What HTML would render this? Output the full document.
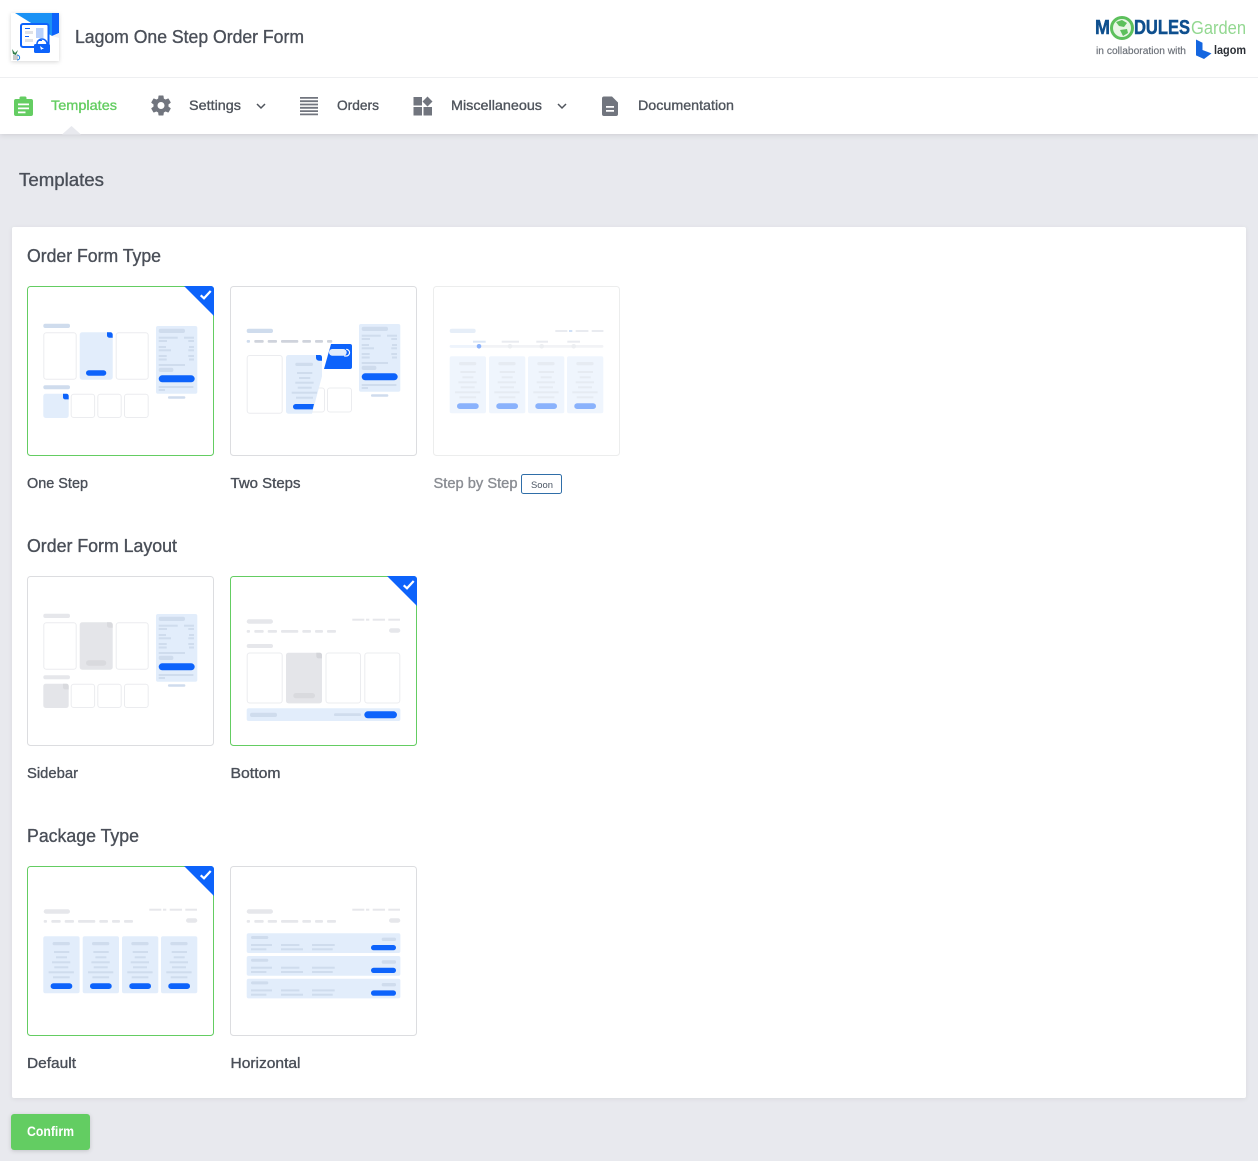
<!DOCTYPE html>
<html lang="en"><head><meta charset="utf-8"><title>Lagom One Step Order Form</title>
<style>
html,body{margin:0;padding:0;background:#e8e9ee;width:1258px;height:1161px;overflow:hidden}
svg{display:block;position:absolute;left:0;top:0}
text{font-family:"Liberation Sans",Arial,sans-serif}
.m{stroke:currentColor;stroke-width:.35px}
.c{fill:var(--bg)}.l{fill:var(--ln)}.b{fill:var(--bt)}.w{fill:#fff;stroke:var(--wb,#ebecef);stroke-width:1}
.g{fill:var(--gr,#e6e7eb)}
</style></head><body>
<svg width="1258" height="1161" viewBox="0 0 1258 1161" xmlns="http://www.w3.org/2000/svg">
<defs>
<filter id="sh" x="-5%" y="-5%" width="110%" height="110%"><feDropShadow dx="0" dy="1" stdDeviation="2" flood-color="#000" flood-opacity=".07"/></filter>
<filter id="sh2" x="-30%" y="-30%" width="160%" height="160%"><feDropShadow dx="0" dy="1" stdDeviation="2" flood-color="#000" flood-opacity=".16"/></filter>
<filter id="sh3" x="-30%" y="-30%" width="160%" height="160%"><feDropShadow dx="0" dy="1" stdDeviation="3" flood-color="#000" flood-opacity=".12"/></filter>

<g id="sb">
<rect width="41.3" height="67.7" rx="2" fill="#e2edfb"/>
<g fill="#cfdced">
<rect x="2.7" y="2.7" width="26.3" height="4.3" rx="2"/>
<rect x="2.7" y="10.7" width="19" height="2"/><rect x="28" y="10.7" width="10" height="2"/>
<rect x="2.7" y="14" width="8.3" height="2"/><rect x="32.3" y="14" width="5.7" height="2"/>
<rect x="2.7" y="20" width="7.3" height="2"/><rect x="33" y="20" width="5" height="2"/>
<rect x="2.7" y="23.3" width="12.3" height="2"/><rect x="32.3" y="23.3" width="5.7" height="2"/>
<rect x="2.7" y="29" width="8" height="2"/><rect x="32.3" y="29" width="5.7" height="2"/>
<rect x="2.7" y="32.5" width="8" height="2"/><rect x="33" y="32.5" width="5" height="2"/>
<rect x="2.7" y="38" width="26.3" height="2"/>
<rect x="2.7" y="41.7" width="14.7" height="4.3" rx="2"/>
<rect x="2.7" y="60" width="34.7" height="2"/>
<rect x="2.7" y="63" width="6.3" height="2"/>
<rect x="12" y="70.3" width="17.3" height="2.4" rx="1"/>
</g>
<rect x="2.7" y="49.3" width="36" height="7" rx="3.5" fill="#0d63fb"/>
</g>

<g id="ol">
<rect class="l" x="16.3" y="37.7" width="26.7" height="4.3" rx="2"/>
<rect class="w" x="16.8" y="46.8" width="32.4" height="46.4" rx="2.5"/>
<rect class="c" x="52.7" y="46.3" width="33" height="47.4" rx="2.5"/>
<path class="b" d="M80 46.3h3.5a2.2 2.2 0 0 1 2.2 2.2v3.2h-3.5a2.2 2.2 0 0 1-2.2-2.2z"/>
<rect class="b" x="59" y="84.3" width="20.3" height="5.4" rx="2.7"/>
<rect class="w" x="89.2" y="46.8" width="32" height="46.4" rx="2.5"/>
<rect class="l" x="16.3" y="99.3" width="26.7" height="4" rx="2"/>
<rect class="c" x="16.3" y="107.7" width="25.4" height="24.3" rx="2.5"/>
<path class="b" d="M36 107.7h3.5a2.2 2.2 0 0 1 2.2 2.2v3.5h-3.5a2.2 2.2 0 0 1-2.2-2.2z"/>
<rect class="w" x="44.2" y="108.2" width="23.4" height="23.3" rx="2.5"/>
<rect class="w" x="70.8" y="108.2" width="23.4" height="23.3" rx="2.5"/>
<rect class="w" x="97.5" y="108.2" width="23.7" height="23.3" rx="2.5"/>
</g>

<g id="hd" class="g">
<rect x="16.7" y="43.3" width="26.3" height="4.4" rx="2.2"/>
<rect x="122.3" y="42.7" width="12" height="2"/><rect x="136" y="42.7" width="3.3" height="2"/><rect x="142.7" y="42.7" width="12.3" height="2"/><rect x="158.3" y="42.7" width="11.7" height="2"/>
</g>
<g id="ds" class="g">
<rect x="16.7" y="54" width="3.3" height="2.7" rx="1"/><rect x="24.3" y="54" width="9.4" height="2.7" rx="1"/><rect x="37.7" y="54" width="9.3" height="2.7" rx="1"/><rect x="51" y="54" width="17.3" height="2.7" rx="1"/><rect x="72.3" y="54" width="8.7" height="2.7" rx="1"/><rect x="85" y="54" width="8" height="2.7" rx="1"/>
</g>
<g id="col">
<rect class="c" width="36.3" height="57" rx="2"/>
<g class="l">
<rect x="9.3" y="5.7" width="17.3" height="3.3" rx="1.5"/>
<rect x="10.7" y="14.7" width="15.3" height="2"/><rect x="12.7" y="20" width="11" height="2"/><rect x="8.7" y="25" width="18.3" height="2"/><rect x="11" y="30" width="14" height="2"/><rect x="5.3" y="35" width="25.3" height="2"/><rect x="9.7" y="40" width="16.7" height="2"/>
</g>
<rect class="b" x="7.3" y="47" width="21.7" height="5.7" rx="2.8"/>
</g>
<g id="row">
<rect width="153.7" height="19.7" rx="2" fill="#e2edfb"/>
<g fill="#cfdced">
<rect x="4.3" y="2.7" width="17.3" height="3" rx="1.5"/><rect x="135" y="4.3" width="14.3" height="3.4" rx="1.5"/>
<rect x="4.3" y="10.7" width="21" height="2"/><rect x="34.3" y="10.7" width="18.4" height="2"/><rect x="65.3" y="10.7" width="22.7" height="2"/>
<rect x="4.3" y="15" width="15.4" height="2"/><rect x="34.3" y="15" width="22" height="2"/><rect x="65.3" y="15" width="20.7" height="2"/>
</g>
<rect x="124.3" y="11.7" width="25" height="5.3" rx="2.6" fill="#0d63fb"/>
</g>
<g id="tick"><path d="M157 0h27a3 3 0 0 1 3 3v27z" fill="#0d63fb"/><path d="M173.7 9.3l3.3 3 6.7-7.3" fill="none" stroke="#fff" stroke-width="2.2"/></g>
</defs>

<!-- top bars -->
<rect width="1258" height="134" fill="#fff" filter="url(#sh3)"/>
<rect y="77" width="1258" height="1" fill="#eeeff1"/>
<path d="M62 134.500L71.500 126L81 134.500z" fill="#e8e9ee"/>

<!-- app logo -->
<rect x="11" y="13" width="48" height="48" fill="#fff" filter="url(#sh2)"/>
<path d="M15 13H52V36z" fill="#1a92f5"/>
<path d="M52 13H59V33L52 36z" fill="#0d63fb"/>
<path d="M59 33v5l-7-2z" fill="#eef1f5"/>
<rect x="21" y="24" width="27.500" height="23" rx="2" fill="#fff" stroke="#0d63fb" stroke-width="2"/>
<rect x="36" y="28" width="7.500" height="10" fill="#b9d1fb"/><rect x="25" y="28" width="5" height="1" fill="#0d63fb"/><rect x="25" y="31" width="8" height="3" fill="#dfe1e6"/><rect x="25" y="36" width="4" height="1" fill="#0d63fb"/><rect x="25" y="39" width="8" height="3" fill="#dfe1e6"/><rect x="38" y="40" width="4" height="1" fill="#0d63fb"/>
<rect x="34" y="44" width="16" height="9" rx="1.500" fill="#0d63fb"/><path d="M37 44a4.800 4.800 0 0 1 10 0" fill="none" stroke="#0d63fb" stroke-width="1.500"/><path d="M40 46l1 4 1-1 2 0z" fill="#fff"/>
<rect x="13" y="55" width="5" height="5" fill="#c9cbcd"/><path d="M12 49l3 4 3-3-2 5-3-1z" fill="#2e7d4a"/><path d="M17 55c3 0 4 5 0 5" fill="none" stroke="#1a80e5" stroke-width="1"/>

<text x="75" y="43" font-size="18.500" fill="#4a4f58" class="m" style="color:#4a4f58" textLength="229" lengthAdjust="spacingAndGlyphs">Lagom One Step Order Form</text>

<!-- MG logo -->
<text x="1095" y="34" font-size="20" font-weight="700" fill="#0e4f8e" stroke="#0e4f8e" stroke-width=".5" textLength="15" lengthAdjust="spacingAndGlyphs">M</text>
<circle cx="1122" cy="28" r="10.500" fill="#e8f6e6" stroke="#5cc05c" stroke-width="3"/>
<path d="M1116 22l6-2 5 3-3 4-5-1zM1120 30l7-1 1 4-5 3z" fill="#5cc05c"/>
<text x="1134" y="34" font-size="20" font-weight="700" fill="#0e4f8e" stroke="#0e4f8e" stroke-width=".5" textLength="56" lengthAdjust="spacingAndGlyphs">DULES</text>
<text x="1191" y="34" font-size="18" fill="#93d891" textLength="55" lengthAdjust="spacingAndGlyphs">Garden</text>
<text x="1096" y="54" font-size="10" fill="#6b7078" class="m" style="color:#6b7078;stroke-width:.15px" textLength="90" lengthAdjust="spacingAndGlyphs">in collaboration with</text>
<path d="M1196 39.500l6.500 3.300v7.200l9 3.400-7.500 5.600-8-3.600z" fill="#1466e0"/>
<text x="1214" y="54" font-size="11.500" font-weight="700" fill="#2b2f36" textLength="32" lengthAdjust="spacingAndGlyphs">lagom</text>

<!-- nav -->
<path d="M16 99h3.500v-1.200a1.400 1.400 0 0 1 1.400-1.300h4.200a1.400 1.400 0 0 1 1.400 1.300V99H31a2 2 0 0 1 2 2v13a2 2 0 0 1-2 2H16a2 2 0 0 1-2-2v-13a2 2 0 0 1 2-2z" fill="#64cd62"/>
<path d="M18 103.500h11v1.700H18zM18 107.500h11v1.700H18zM18 111.500h7.500v1.700H18z" fill="#fff"/>
<text x="51" y="110" font-size="14" fill="#64cd62" class="m" style="color:#64cd62" textLength="66" lengthAdjust="spacingAndGlyphs">Templates</text>

<path transform="translate(149 93.500)" fill="#71757e" d="M12,15.500A3.500,3.500 0 0,1 8.500,12A3.500,3.500 0 0,1 12,8.500A3.500,3.500 0 0,1 15.500,12A3.500,3.500 0 0,1 12,15.500M19.430,12.970C19.470,12.650 19.500,12.330 19.500,12C19.500,11.670 19.470,11.340 19.430,11L21.540,9.370C21.730,9.220 21.780,8.950 21.660,8.730L19.660,5.270C19.540,5.050 19.270,4.960 19.050,5.050L16.560,6.050C16.040,5.660 15.500,5.320 14.870,5.070L14.500,2.420C14.460,2.180 14.250,2 14,2H10C9.750,2 9.540,2.180 9.500,2.420L9.130,5.070C8.500,5.320 7.960,5.660 7.440,6.050L4.950,5.050C4.730,4.960 4.460,5.050 4.340,5.270L2.340,8.730C2.210,8.950 2.270,9.220 2.460,9.370L4.570,11C4.530,11.340 4.500,11.670 4.500,12C4.500,12.330 4.530,12.650 4.570,12.970L2.460,14.630C2.270,14.780 2.210,15.050 2.340,15.270L4.340,18.730C4.460,18.950 4.730,19.030 4.950,18.950L7.440,17.940C7.960,18.340 8.500,18.680 9.130,18.930L9.500,21.580C9.540,21.820 9.750,22 10,22H14C14.250,22 14.460,21.820 14.500,21.580L14.870,18.930C15.500,18.670 16.040,18.340 16.560,17.940L19.050,18.950C19.270,19.030 19.540,18.950 19.660,18.730L21.660,15.270C21.780,15.050 21.730,14.780 21.540,14.630L19.430,12.970Z"/>
<text x="189" y="110" font-size="14" fill="#4f545c" class="m" style="color:#4f545c" textLength="52" lengthAdjust="spacingAndGlyphs">Settings</text>
<path d="M257 104l4 4 4-4" fill="none" stroke="#4f545c" stroke-width="1.500"/>

<path d="M300 97h18v1.800h-18zM300 100.300h18v1.800h-18zM300 103.600h18v1.800h-18zM300 106.900h18v1.800h-18zM300 110.200h18v1.800h-18zM300 113.500h18v1.800h-18z" fill="#71757e"/>
<text x="337" y="110" font-size="14" fill="#4f545c" class="m" style="color:#4f545c" textLength="42" lengthAdjust="spacingAndGlyphs">Orders</text>

<path d="M413.500 97h8.500v8.500h-8.500zM413.500 107h8.500v8.500h-8.500zM423.500 107h8.500v8.500h-8.500zM427.500 96.500l5 5-5 5-5-5z" fill="#71757e"/>
<text x="451" y="110" font-size="14" fill="#4f545c" class="m" style="color:#4f545c" textLength="91" lengthAdjust="spacingAndGlyphs">Miscellaneous</text>
<path d="M558 104l4 4 4-4" fill="none" stroke="#4f545c" stroke-width="1.500"/>

<path d="M604 96.500h8l6 6V114a2 2 0 0 1-2 2h-12a2 2 0 0 1-2-2v-15.500a2 2 0 0 1 2-2z" fill="#71757e"/>
<path d="M606 106h8v1.800h-8zM606 110h8v1.800h-8z" fill="#fff"/>
<text x="638" y="110" font-size="14" fill="#4f545c" class="m" style="color:#4f545c" textLength="96" lengthAdjust="spacingAndGlyphs">Documentation</text>

<text x="19" y="186" font-size="18.500" fill="#4a4f58" class="m" style="color:#4a4f58" textLength="85" lengthAdjust="spacingAndGlyphs">Templates</text>

<!-- panel -->
<rect x="12" y="227" width="1234" height="871" rx="2" fill="#fff" filter="url(#sh)"/>

<g fill="#4a4f58" font-size="18.500" class="m" style="color:#4a4f58">
<text x="27" y="262" textLength="134" lengthAdjust="spacingAndGlyphs">Order Form Type</text>
<text x="27" y="552" textLength="150" lengthAdjust="spacingAndGlyphs">Order Form Layout</text>
<text x="27" y="842" textLength="112" lengthAdjust="spacingAndGlyphs">Package Type</text>
</g>

<!-- Card: One Step -->
<g transform="translate(27 286)" style="--bg:#e2edfb;--ln:#cfdced;--bt:#0d63fb">
<rect x=".5" y=".5" width="186" height="169" rx="3" fill="#fff" stroke="#64cd62"/>
<use href="#ol"/>
<use href="#sb" x="129" y="40"/>
<use href="#tick"/>
</g>

<!-- Card: Two Steps -->
<g transform="translate(230 286)">
<rect x=".5" y=".5" width="186" height="169" rx="3" fill="#fff" stroke="#dcdde0"/>
<rect x="16.700" y="42.700" width="26.300" height="4.300" rx="2" fill="#cfdced"/>
<g fill="#cfd3dc"><rect x="16.700" y="54" width="3.300" height="2.700" rx="1" fill="#cfdced"/><rect x="24.300" y="54" width="9.400" height="2.700" rx="1"/><rect x="37.700" y="54" width="9.300" height="2.700" rx="1"/><rect x="51" y="54" width="17.300" height="2.700" rx="1"/><rect x="72.300" y="54" width="8.700" height="2.700" rx="1"/><rect x="85" y="54" width="8" height="2.700" rx="1"/><rect x="97" y="54" width="5.300" height="2.700" rx="1"/></g>
<rect x="17.200" y="69.500" width="35" height="57.700" rx="2.500" fill="#fff" stroke="#ebecef"/>
<rect x="60" y="102" width="34.500" height="24" rx="2.500" fill="#fff" stroke="#ebecef"/>
<rect x="97.500" y="102" width="24" height="24" rx="2.500" fill="#fff" stroke="#ebecef"/>
<path d="M58.500 69h31.200a2.300 2.300 0 0 1 2.300 2.300v19L82 127.700H58.500a2.500 2.500 0 0 1-2.500-2.500V71.500a2.500 2.500 0 0 1 2.500-2.500z" fill="#e2edfb"/>
<path d="M86.700 69h3a2.300 2.300 0 0 1 2.300 2.300v3.500h-3a3 3 0 0 1-3-3V69z" fill="#0d63fb"/>
<g fill="#cfdced"><rect x="65.300" y="76.700" width="17.700" height="3.300" rx="1.500"/><rect x="67" y="86" width="15.300" height="2"/><rect x="69" y="91" width="11.300" height="2"/><rect x="65.300" y="95.700" width="18.300" height="2"/><rect x="67.700" y="100.700" width="14" height="2"/><rect x="61.700" y="105.700" width="25.300" height="2"/><rect x="66" y="110.700" width="17" height="2"/></g>
<path d="M65.700 118h18.300l-1.300 5.400H65.700a2.700 2.700 0 0 1 0-5.400z" fill="#0d63fb"/>
<path d="M101 58h19a2 2 0 0 1 2 2v21a2 2 0 0 1-2 2H94z" fill="#0d63fb"/>
<rect x="99" y="63" width="17.700" height="6.700" rx="3.300" fill="#e2edfb"/>
<path d="M116.200 63.300a3.300 3.300 0 0 1 0 6.700h-2" fill="none" stroke="#fff" stroke-width="1.200"/>
<use href="#sb" x="129" y="38"/>
</g>

<!-- Card: Step by Step -->
<g transform="translate(433 286)">
<rect x=".5" y=".5" width="186" height="169" rx="3" fill="#fff" stroke="#eceded"/>
<g style="--bg:#eff5fd;--ln:#e6ebf2;--bt:#8ab2fc;--gr:#e9ebf0">
<rect x="16.700" y="42.700" width="26" height="4.300" rx="2" fill="#e6eef8"/>
<rect x="122.300" y="44" width="12" height="2" class="g"/><rect x="136" y="44" width="3.300" height="2" fill="#cfe0f7"/><rect x="142.700" y="44" width="12.700" height="2" class="g"/><rect x="158.700" y="44" width="11.700" height="2" class="g"/>
<rect x="16.700" y="59" width="153.700" height="2.700" rx="1.300" fill="#f2f3f6"/><rect x="16.700" y="59" width="29" height="2.700" rx="1.300" fill="#eef4fc"/>
<rect x="40" y="54.700" width="12.700" height="2" fill="#dbe6f6"/><rect x="68.700" y="54.700" width="17.300" height="2" class="g"/><rect x="103.300" y="54.700" width="11.700" height="2" class="g"/><rect x="134.300" y="54.700" width="12.700" height="2" class="g"/>
<circle cx="46" cy="60.300" r="2.300" fill="#8ab2fc"/><circle cx="77" cy="60.300" r="2.300" fill="#eceef1"/><circle cx="108.700" cy="60.300" r="2.300" fill="#eceef1"/><circle cx="140.700" cy="60.300" r="2.300" fill="#eceef1"/>
<use href="#col" x="16.700" y="70.300"/><use href="#col" x="56" y="70.300"/><use href="#col" x="95" y="70.300"/><use href="#col" x="134" y="70.300"/>
</g>
</g>

<g font-size="14.500" fill="#4a4f58" class="m" style="color:#4a4f58">
<text x="27" y="488" textLength="61" lengthAdjust="spacingAndGlyphs">One Step</text>
<text x="230.500" y="488" textLength="70" lengthAdjust="spacingAndGlyphs">Two Steps</text>
<text x="27" y="778" textLength="51" lengthAdjust="spacingAndGlyphs">Sidebar</text>
<text x="230.500" y="778" textLength="50" lengthAdjust="spacingAndGlyphs">Bottom</text>
<text x="27" y="1068" textLength="49" lengthAdjust="spacingAndGlyphs">Default</text>
<text x="230.500" y="1068" textLength="70" lengthAdjust="spacingAndGlyphs">Horizontal</text>
</g>
<text x="433.500" y="488" font-size="14.500" fill="#8a8d93" class="m" style="color:#8a8d93" textLength="84" lengthAdjust="spacingAndGlyphs">Step by Step</text>
<rect x="521.500" y="474.500" width="40" height="19" rx="2" fill="#fff" stroke="#2f6ea8"/>
<text x="531" y="488" font-size="9.500" fill="#4b5563" textLength="22" lengthAdjust="spacingAndGlyphs">Soon</text>

<!-- Card: Sidebar -->
<g transform="translate(27 576)" style="--bg:#e4e5e9;--ln:#e6e7eb;--bt:#d9dade">
<rect x=".5" y=".5" width="186" height="169" rx="3" fill="#fff" stroke="#dcdde0"/>
<use href="#ol"/>
<use href="#sb" x="129" y="38"/>
</g>

<!-- Card: Bottom -->
<g transform="translate(230 576)" style="--bg:#e4e5e9;--ln:#e6e7eb;--bt:#d9dade">
<rect x=".5" y=".5" width="186" height="169" rx="3" fill="#fff" stroke="#64cd62"/>
<use href="#hd"/><use href="#ds"/>
<rect class="g" x="97" y="54" width="9" height="2.700" rx="1"/>
<rect class="g" x="159" y="52.300" width="11.300" height="4.400" rx="2.200"/>
<rect class="g" x="16.700" y="68" width="26.300" height="4" rx="2"/>
<rect class="w" x="17.200" y="77" width="35" height="50" rx="2.500"/>
<rect class="c" x="56" y="76.700" width="36" height="50.700" rx="2.500"/>
<path d="M86.300 76.700h3.400a2.300 2.300 0 0 1 2.300 2.300v3.400h-3.400a2.300 2.300 0 0 1-2.300-2.300z" fill="#d4d5da"/>
<rect class="b" x="63.300" y="117" width="21.700" height="5.300" rx="2.600"/>
<rect class="w" x="96" y="77" width="34.500" height="50" rx="2.500"/>
<rect class="w" x="134.800" y="77" width="35" height="50" rx="2.500"/>
<rect x="16.700" y="132.300" width="153.700" height="12.700" rx="2" fill="#e2edfb"/>
<rect x="20" y="136.700" width="27" height="4.300" rx="2" fill="#cfdced"/>
<rect x="104" y="137.300" width="27" height="2.700" rx="1.300" fill="#cfdced"/>
<rect x="134.300" y="135.300" width="32.700" height="7" rx="3.500" fill="#0d63fb"/>
<use href="#tick"/>
</g>

<!-- Card: Default -->
<g transform="translate(27 866)" style="--bg:#e2edfb;--ln:#cfdced;--bt:#0d63fb">
<rect x=".5" y=".5" width="186" height="169" rx="3" fill="#fff" stroke="#64cd62"/>
<use href="#hd"/><use href="#ds"/>
<rect class="g" x="97" y="54" width="9" height="2.700" rx="1"/>
<rect class="g" x="159" y="52.300" width="11.300" height="4.400" rx="2.200"/>
<use href="#col" x="16.300" y="70.300"/><use href="#col" x="55.700" y="70.300"/><use href="#col" x="95" y="70.300"/><use href="#col" x="134" y="70.300"/>
<use href="#tick"/>
</g>

<!-- Card: Horizontal -->
<g transform="translate(230 866)">
<rect x=".5" y=".5" width="186" height="169" rx="3" fill="#fff" stroke="#dcdde0"/>
<use href="#hd"/><use href="#ds"/>
<rect class="g" x="97" y="54" width="9" height="2.700" rx="1"/>
<rect class="g" x="159" y="52.300" width="11.300" height="4.400" rx="2.200"/>
<use href="#row" x="16.700" y="67.300"/><use href="#row" x="16.700" y="90"/><use href="#row" x="16.700" y="112.700"/>
</g>

<!-- Confirm -->
<rect x="11" y="1114" width="79" height="36" rx="3" fill="#64cd62" filter="url(#sh2)"/>
<text x="27" y="1136" font-size="13.500" font-weight="700" fill="#fff" textLength="47" lengthAdjust="spacingAndGlyphs">Confirm</text>
</svg>
</body></html>
